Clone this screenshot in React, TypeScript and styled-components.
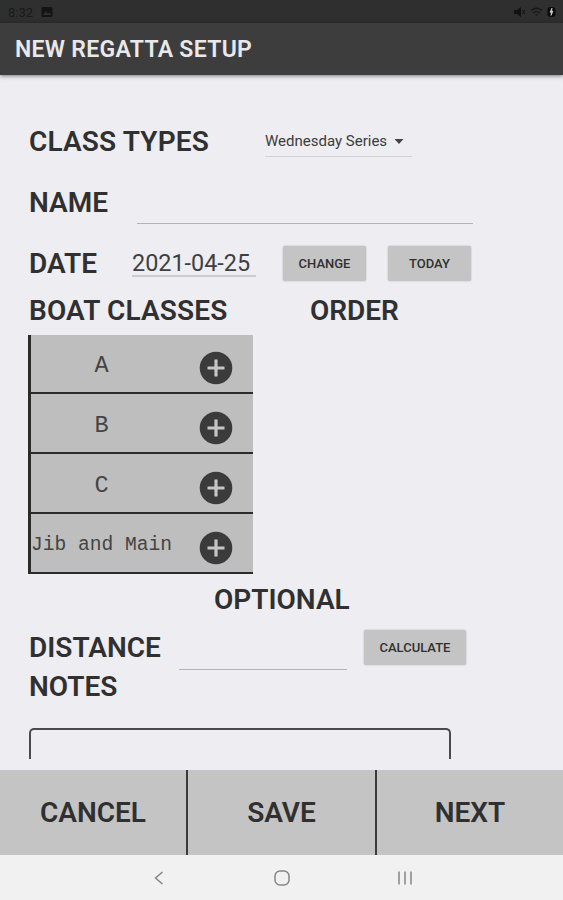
import React from "react";
import styled, { createGlobalStyle } from "styled-components";

const GlobalStyle = createGlobalStyle`
  * { box-sizing: border-box; }
  body { margin: 0; background: #eeedf2; font-family: Roboto, sans-serif; }
  button { font-family: inherit; border: 0; padding: 0; margin: 0; }
`;

const Screen = styled.div`
  display: flex;
  flex-direction: column;
  width: 563px;
  height: 900px;
  overflow: hidden;
  background: #eeedf2;
  color: #303030;
`;

const StatusBar = styled.div`
  display: flex;
  align-items: center;
  flex: none;
  height: 23px;
  padding: 1px 7px 0 8px;
  background: #2f2f2f;
  color: #191919;
  font-size: 13px;
`;

const StatusIcons = styled.div`
  display: flex;
  align-items: center;
  gap: 4px;
  margin-left: auto;
`;

const StatusPhoto = styled.svg`
  margin-left: 8px;
`;

const Header = styled.header`
  display: flex;
  align-items: center;
  flex: none;
  height: 52px;
  padding: 2px 0 0 15px;
  background: #3d3d3d;
  box-shadow: 0 1px 4px rgba(0, 0, 0, 0.5);
  z-index: 1;
`;

const Title = styled.h1`
  margin: 0;
  color: #e9e9eb;
  font-size: 23px;
  line-height: 28px;
  font-weight: 600;
  letter-spacing: 0.3px;
  white-space: nowrap;
`;

const Form = styled.main`
  display: flex;
  flex-direction: column;
  flex: 1;
  min-height: 0;
  padding: 36px 0 0 29px;
`;

const Row = styled.div<{ $h: number }>`
  display: flex;
  align-items: center;
  flex: none;
  height: ${(p) => p.$h}px;
`;

const Label = styled.div<{ $w?: number; $spacing?: number; $drop?: number }>`
  flex: none;
  width: ${(p) => (p.$w ? `${p.$w}px` : "auto")};
  padding-top: ${(p) => p.$drop ?? 0}px;
  font-size: 28px;
  line-height: 32px;
  font-weight: 600;
  letter-spacing: ${(p) => p.$spacing ?? 0}px;
  white-space: nowrap;
`;

const Select = styled.div`
  display: flex;
  align-items: center;
  gap: 7px;
  width: 147px;
  height: 31px;
  padding-top: 1px;
  border-bottom: 1px solid #d2d1d5;
  color: #3c3c3c;
  font-size: 15px;
  white-space: nowrap;
`;

const Underline = styled.div<{ $w: number; $h: number }>`
  width: ${(p) => p.$w}px;
  height: ${(p) => p.$h}px;
  align-self: flex-start;
  border-bottom: 1px solid #b4b3b8;
`;

const DateField = styled.div`
  width: 124px;
  height: 29px;
  border-bottom: 2px solid #cdccd0;
  color: #3f3f3f;
  font-size: 23.400px;
  line-height: 30px;
  white-space: nowrap;
`;

const SmallButton = styled.button<{ $w: number; $ml: number; $mt?: number }>`
  width: ${(p) => p.$w}px;
  height: 35px;
  margin-top: ${(p) => p.$mt ?? 0}px;
  margin-left: ${(p) => p.$ml}px;
  border-radius: 2px;
  background: #c4c4c4;
  box-shadow: 0 0 2px rgba(0, 0, 0, 0.25);
  color: #303030;
  font-size: 13px;
  font-weight: 500;
`;

const ClassList = styled.ul`
  flex: none;
  width: 225px;
  margin: 8px 0 0 -1px;
  padding: 0;
  list-style: none;
  border-left: 3px solid #2b2b2b;
  background: #bebebe;
`;

const ClassItem = styled.li<{ $h: number }>`
  display: flex;
  align-items: center;
  height: ${(p) => p.$h}px;
  border-bottom: 2px solid #2b2b2b;
`;

const ClassName = styled.span<{ $size: number }>`
  width: 141px;
  margin-top: 4px;
  color: #444;
  text-align: center;
  font-family: "Liberation Mono", monospace;
  font-size: ${(p) => p.$size}px;
  white-space: nowrap;
`;

const AddButton = styled.button`
  width: 34px;
  height: 34px;
  margin: 9px 0 0 27px;
  background: none;

  svg {
    display: block;
  }
`;

const NotesBox = styled.div`
  flex: none;
  width: 422px;
  height: 31px;
  margin-top: 26px;
  border: 2px solid #4a4a4e;
  border-bottom: 0;
  border-radius: 5px 5px 0 0;
`;

const Actions = styled.footer`
  display: flex;
  flex: none;
  height: 85px;
  background: #c4c4c4;
`;

const Action = styled.button<{ $w: number; $divider?: boolean }>`
  width: ${(p) => p.$w}px;
  background: transparent;
  border-right: ${(p) => (p.$divider ? "2px solid #3b3b3b" : "0")};
  color: #303030;
  font-size: 28px;
  font-weight: 600;
`;

const NavBar = styled.nav`
  display: flex;
  align-items: center;
  flex: none;
  height: 45px;
  padding: 1px 0 0 150px;
  gap: 105px;
  background: #f1f1f1;
`;

const classes = [
  { name: "A", size: 23.5, height: 59 },
  { name: "B", size: 23.5, height: 60 },
  { name: "C", size: 23.5, height: 60 },
  { name: "Jib and Main", size: 19.6, height: 60 },
];

export default function App() {
  return (
    <Screen>
      <GlobalStyle />
      <StatusBar>
        8:32
        <StatusPhoto width="12" height="12" viewBox="0 0 12 12">
          <rect x="0.5" y="1" width="11" height="10" rx="1.5" fill="#141414" />
          <path d="M2 9 5 5.5 7 8l1.5-1.5L10.500 9z" fill="#2f2f2f" />
        </StatusPhoto>
        <StatusIcons>
          <svg width="12" height="12" viewBox="0 0 12 12">
            <path d="M0 4h3l4-3v10L3 8H0z" fill="#121212" />
            <path d="M8.500 4 11 8M11 4 8.500 8" stroke="#151515" />
          </svg>
          <svg width="13" height="12" viewBox="0 0 13 12" fill="none" stroke="#191919" strokeWidth="1.400">
            <path d="M1 4.500q5.500-4.500 11 0M3 7q3.500-3 7 0M5.500 9.200q1-1 2 0" />
          </svg>
          <svg width="9" height="12" viewBox="0 0 9 12">
            <rect x="0.500" y="1" width="8" height="10" rx="3" fill="#0b0b0b" />
            <path d="M5 2 3 6.300h1.300L4 9.500l2-4.300H4.700z" fill="#ddd" stroke="#ddd" strokeWidth=".6" />
          </svg>
        </StatusIcons>
      </StatusBar>
      <Header>
        <Title>NEW REGATTA SETUP</Title>
      </Header>
      <Form>
        <Row $h={60}>
          <Label $w={236} $spacing={0.15} $drop={2}>CLASS TYPES</Label>
          <Select>
            Wednesday Series
            <svg width="10" height="5" viewBox="0 0 10 5">
              <path d="M0.500 0h9L5 5z" fill="#444" />
            </svg>
          </Select>
        </Row>
        <Row $h={61}>
          <Label $w={108} $drop={2}>NAME</Label>
          <Underline $w={336} $h={53} />
        </Row>
        <Row $h={61}>
          <Label $w={103} $drop={2}>DATE</Label>
          <DateField>2021-04-25</DateField>
          <SmallButton $w={83} $ml={27} $mt={2}>CHANGE</SmallButton>
          <SmallButton $w={83} $ml={22} $mt={2}>TODAY</SmallButton>
        </Row>
        <Row $h={34}>
          <Label $w={281} $spacing={0.15} $drop={2}>BOAT CLASSES</Label>
          <Label $drop={2}>ORDER</Label>
        </Row>
        <ClassList>
          {classes.map((c) => (
            <ClassItem key={c.name} $h={c.height}>
              <ClassName $size={c.size}>{c.name}</ClassName>
              <AddButton aria-label={`Add ${c.name}`}>
                <svg width="34" height="34" viewBox="0 0 34 34">
                  <circle cx="17" cy="17" r="16.300" fill="#3b3b3b" />
                  <path d="M17 8.500v17M8.500 17h17" stroke="#c6c6c6" strokeWidth="3.200" />
                </svg>
              </AddButton>
            </ClassItem>
          ))}
        </ClassList>
        <Row $h={52}>
          <Label $w={185} />
          <Label>OPTIONAL</Label>
        </Row>
        <Row $h={43}>
          <Label $w={150}>DISTANCE</Label>
          <Underline $w={168} $h={44} />
          <SmallButton $w={102} $ml={17}>CALCULATE</SmallButton>
        </Row>
        <Row $h={33}>
          <Label $drop={2}>NOTES</Label>
        </Row>
        <NotesBox />
      </Form>
      <Actions>
        <Action $w={188} $divider>CANCEL</Action>
        <Action $w={189} $divider>SAVE</Action>
        <Action $w={186}>NEXT</Action>
      </Actions>
      <NavBar>
        <svg width="18" height="18" viewBox="0 0 18 18" fill="none" stroke="#858585" strokeWidth="1.500">
          <path d="M12.500 3 5.500 9l7 6" />
        </svg>
        <svg width="18" height="18" viewBox="0 0 18 18" fill="none" stroke="#858585" strokeWidth="1.500">
          <rect x="2" y="2" width="14" height="14" rx="5" />
        </svg>
        <svg width="18" height="18" viewBox="0 0 18 18" fill="none" stroke="#858585" strokeWidth="1.500">
          <path d="M3 2.500v13M9 2.500v13M15 2.500v13" />
        </svg>
      </NavBar>
    </Screen>
  );
}
